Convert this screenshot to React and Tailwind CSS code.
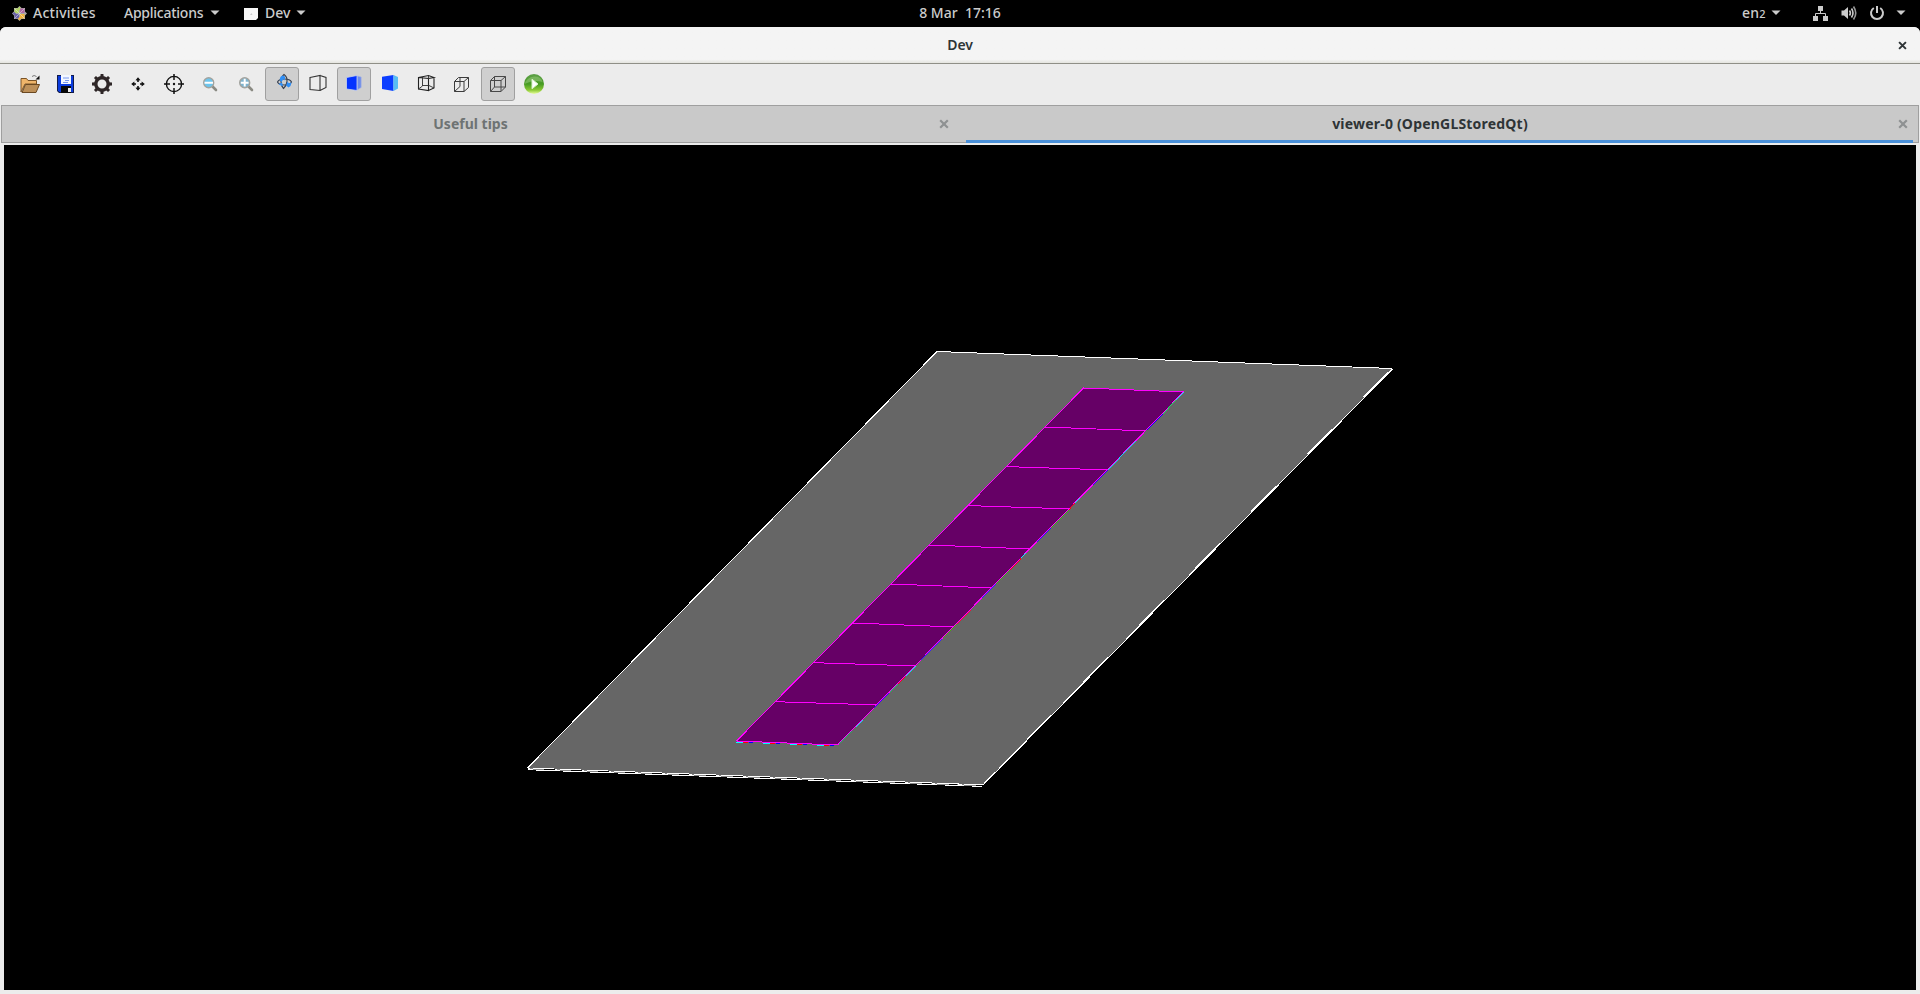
import React from "react";

const Icon = ({ children }) => (
  <svg width="24" height="24" viewBox="0 0 24 24" fill="none">
    {children}
  </svg>
);

const OpenIcon = () => (
  <Icon>
    <path d="M3 20V6.5h5.5L10 8.5h8.5V12H7z" fill="#efb56a" stroke="#7a5428" />
    <path d="M4 20.5 7.5 12.500H21.500L18 20.500z" fill="#bd9059" stroke="#6b4922" />
    <path d="M14 4.500Q16 2.500 18.500 4.500" stroke="#777" />
    <path d="M21.500 3.500V7.500H17.500z" fill="#111" />
  </Icon>
);

const SaveIcon = () => (
  <Icon>
    <path d="M3 3H20V21H5L3 19z" fill="#111b4c" />
    <path d="M4 4H19V20H5.500L4 18.500z" fill="#0b3cdd" />
    <rect x="7" y="3" width="10" height="9" fill="#f3f7ff" />
    <path d="M9 6H15M11 8.500H15M9 10.500H14" stroke="#7898ef" />
    <rect x="7" y="14" width="10" height="7" fill="#080808" />
    <rect x="14" y="16" width="3" height="4" fill="#ececec" />
  </Icon>
);

const GEAR_ANGLES = [0, 45, 90, 135, 180, 225, 270, 315];
const GearIcon = () => (
  <Icon>
    <circle cx="12" cy="12" r="6.200" stroke="#2e2627" strokeWidth="3.400" />
    {GEAR_ANGLES.map((a) => (
      <path key={a} d="M10.300 5.500 10.600 2H13.400L13.700 5.500z" fill="#2e2627" transform={`rotate(${a} 12 12)`} />
    ))}
  </Icon>
);

const MoveIcon = () => (
  <Icon>
    {[0, 90, 180, 270].map((a) => (
      <path key={a} d="M12 5.200 14.500 8.300 12.800 8.500V10H11.200V8.500L9.500 8.300z" fill="#111" transform={`rotate(${a} 12 12)`} />
    ))}
  </Icon>
);

const TargetIcon = () => (
  <Icon>
    <circle cx="12" cy="12" r="7.600" stroke="#111" strokeWidth="1.400" />
    <path d="M12 2V8M12 16V22M2 12H8M16 12H22" stroke="#111" strokeWidth="1.500" />
    <circle cx="12" cy="12" r="1.200" fill="#111" />
  </Icon>
);

const ZoomIcon = ({ plus }) => (
  <Icon>
    <path d="M14.500 14.500 18 18" stroke="#8b8b83" strokeWidth="2.600" strokeLinecap="round" />
    <circle cx="10.700" cy="10.700" r="5" fill={plus ? "#7fb4cf" : "#6dc5ed"} stroke="#a3a39e" strokeWidth="1.400" />
    <path d={plus ? "M6.800 10.700H14.600M10.700 6.800V14.600" : "M6.500 10.700H15"} stroke="#fff" strokeWidth="2" />
  </Icon>
);

const RotateIcon = () => (
  <Icon>
    <path d="M7.500 10Q9 7 14.500 7T21.500 10Q20 13 14.500 13T7.500 10z" stroke="#3b4352" strokeWidth="1.200" />
    <path d="M14 2.500Q17.500 5 17 9.500T13.500 16.500Q11 14 11 9.500T14 2.500z" stroke="#3b4352" strokeWidth="1.200" />
    <path d="M9.800 8.500Q9.500 4.500 12.500 3.500L15 4.500 15 8.500 13.500 7 11.500 10z" fill="#2f8ef5" />
    <path d="M8.500 12 12 10.500 13 13.500 11.500 14zM16 13.500 17.500 9.500 18.800 11.200 21.500 10.500 20.500 14 18.500 15.500z" fill="#2f8ef5" />
  </Icon>
);

const PerspectiveIcon = () => (
  <Icon>
    <path d="M4 5.500 14 3.500V18.500L4 17.500zM14 3.500 20 5.500V15.500L14 18.500" stroke="#333" strokeWidth="1.100" />
  </Icon>
);

const HiddenSolidIcon = () => (
  <Icon>
    <path d="M4.500 5.500 15 3.500V18.500L4.500 17z" fill="#0433ff" stroke="#c9d3ee" strokeWidth="0.800" />
    <path d="M15.500 4 19.200 5V15.500L15.500 17.700z" fill="#6f8de8" stroke="#a7b6e6" strokeWidth="0.600" />
  </Icon>
);

const SolidIcon = () => (
  <Icon>
    <path d="M4 4.700 15.500 3V19L4 17z" fill="#0b3dff" />
    <path d="M15.500 3 20 5V16.500L15.500 19z" fill="#58bdf3" />
  </Icon>
);

const WirePerspectiveIcon = () => (
  <Icon>
    <path d="M4.500 5.500 14.500 6.500V18.500L4.500 17zM4.500 5.500 14.500 3.500 20 5.500 14.500 6.500M20 5.500V16L14.500 18.500" stroke="#222" strokeWidth="1.100" />
    <path d="M8.500 5V14L4.500 17M8.500 13.500H15L20 16M14.500 3.500V7" stroke="#2d2d2d" strokeWidth=".9" />
  </Icon>
);

const OrthoIcon = ({ grey }) => (
  <Icon>
    {grey ? (
      <path d="M4.500 8.500H15V19.500H4.500zM4.500 8.500 8.500 4.500H19.500L15 8.500M19.500 4.500V15L15 19.500M8.500 4.500V15H19.500M8.500 15 4.500 19.500" stroke="#484848" />
    ) : (
      <path d="M4.500 9.500H14V19.500H4.500zM4.500 9.500 8.500 5.500H18.500L14 9.500M18.500 5.500V15.500L14 19.500M10 5.500V14.500L4.500 19.500" stroke="#3c3c3c" />
    )}
  </Icon>
);

const RunIcon = () => (
  <Icon>
    <defs>
      <linearGradient id="run" x1="0" y1="0" x2="0" y2="1">
        <stop offset="0" stopColor="#5fa04a" />
        <stop offset="0.500" stopColor="#469b22" />
        <stop offset="0.800" stopColor="#8bc934" />
        <stop offset="1" stopColor="#eaffa0" />
      </linearGradient>
    </defs>
    <circle cx="12" cy="12" r="10" fill="url(#run)" />
    <path d="M2.500 12Q5 5 12 4.500T20.500 10Q12 7 2.500 12z" fill="#9ccc80" opacity=".5" />
    <path d="M10 7.200 16 12 10 16.800z" fill="#fff" stroke="#d9f3c6" />
  </Icon>
);

const TOOLS = [
  { id: "open", icon: <OpenIcon /> },
  { id: "save", icon: <SaveIcon /> },
  { id: "settings", icon: <GearIcon /> },
  { id: "move", icon: <MoveIcon /> },
  { id: "pick", icon: <TargetIcon /> },
  { id: "zoom-out", icon: <ZoomIcon /> },
  { id: "zoom-in", icon: <ZoomIcon plus /> },
  { id: "rotate", icon: <RotateIcon />, on: true },
  { id: "hidden-line", icon: <PerspectiveIcon /> },
  { id: "hidden-surface", icon: <HiddenSolidIcon />, on: true },
  { id: "surface", icon: <SolidIcon /> },
  { id: "wireframe", icon: <WirePerspectiveIcon /> },
  { id: "perspective", icon: <OrthoIcon /> },
  { id: "ortho", icon: <OrthoIcon grey />, on: true },
  { id: "run", icon: <RunIcon /> },
];

const Caret = () => (
  <svg width="10" height="6" viewBox="0 0 10 6" className="shrink-0">
    <path d="M0.500 0.500H9.500L5 5z" fill="#ccc" />
  </svg>
);

const Cross = ({ className }) => (
  <svg width="10" height="10" viewBox="0 0 10 10" className={className}>
    <path d="M1.200 1.200 8.800 8.800M8.800 1.200 1.200 8.800" stroke="currentColor" strokeWidth="2.200" />
  </svg>
);

const TopBar = () => (
  <header className="grid h-[27px] grid-cols-3 bg-black text-[14px] leading-[26px] font-medium text-[#ccc]">
    <div className="flex h-[26px] items-center pl-3">
      <svg width="15" height="15" viewBox="0 0 15 15" className="mr-[6px]">
        <path d="M7.500 0 9.500 2H13V5.500L15 7.500 13 9.500V13H9.500L7.500 15 5.500 13H2V9.500L0 7.500 2 5.500V2H5.500z" fill="#aaa" />
        <path d="M2.500 2.500H7V7H2.500zM7.500 0.500 9 2.500 7.500 4 6 2.500z" fill="#b3d465" />
        <path d="M8 2.500H12.500V7H8z" fill="#b06aa5" />
        <path d="M2.500 8H7V12.500H2.500zM0.500 7.500 2.500 6 4 7.500 2.500 9z" fill="#6960a8" />
        <path d="M8 8H12.500V12.500H8zM7.500 11 9 12.500 7.500 14.500 6 12.500z" fill="#efb33f" />
        <path d="M2.500 2.500 12.500 12.500M12.500 2.500 2.500 12.500" stroke="#eee" strokeWidth=".5" />
      </svg>
      <span className="h-[26px] w-[91px] tracking-[0.25px]">Activities</span>
      <span className="h-[26px] w-[86px] tracking-[-0.25px]">Applications</span>
      <Caret />
      <svg width="14" height="12" viewBox="0 0 14 12" className="mt-[2px] ml-6">
        <path d="M0 0H14V10L12 12H0z" fill="#f7f7f7" />
        <path d="M6 7 7.500 5 8.500 7z" fill="#ccc" />
      </svg>
      <span className="ml-[7px] h-[26px] w-[31px]">Dev</span>
      <Caret />
    </div>
    <div className="h-[26px] text-center whitespace-pre">8 Mar  17:16</div>
    <div className="flex h-[26px] items-center justify-end pr-[14px]">
      <span className="h-[26px] w-[29px] tracking-[0.2px]">en<span className="text-[11px]">2</span></span>
      <Caret />
      <svg width="16" height="16" viewBox="0 0 16 16" className="ml-8" fill="#ccc">
        <path d="M5 1H10V6H5zM0 11H5V16H0zM10 11H15V16H10z" />
        <path d="M7.500 5V8.500M2.500 12V8.500H12.500V12" stroke="#ccc" fill="none" />
      </svg>
      <svg width="16" height="16" viewBox="0 0 16 16" className="ml-3" fill="none" stroke="#ccc" strokeWidth="1.600">
        <path d="M0.500 5.500H3L7 2V14L3 10.500H0.500z" fill="#ccc" stroke="none" />
        <path d="M8.500 5.500Q10.300 8 8.500 10.500M10.500 3.500Q13.500 8 10.500 12.500" />
        <path d="M12.500 1.500Q17 8 12.500 14.500" stroke="#999" />
      </svg>
      <svg width="16" height="16" viewBox="0 0 16 16" className="ml-[12px]" fill="none" stroke="#ccc" strokeWidth="2">
        <path d="M4.800 3A6 6 0 1 0 11.200 3M8 1V8" />
      </svg>
      <span className="ml-[11px] flex"><Caret /></span>
    </div>
  </header>
);

const STRIP = [
  [1045, 427, 1145, 430.9],
  [1006.5, 466.6, 1107, 469.9],
  [968.5, 505.6, 1068.5, 508.9],
  [929, 545, 1029.5, 548.9],
  [891, 584, 991, 587.9],
  [853, 623, 952.5, 626.9],
  [814, 662.7, 914.5, 665.9],
  [775.5, 701.7, 875.5, 704.9],
];

/* Coloured runs along the strip's right side, as [start y, end y, colour]. */
const RUNS = [
  [392, 400, "#00ffff"], [400, 416, "#00ff55"], [414, 430, "#0000ff"], [441, 470, "#00e5ff"],
  [470, 485, "#2000ff"], [498, 503, "#00ffff"], [503, 512, "#ff0000"], [510, 528, "#22c800"],
  [528, 542, "#1a10ff"], [553, 558, "#00ffff"], [558, 572, "#ff0000"], [570, 584, "#22c800"],
  [584, 598, "#1030ff"], [610, 624, "#ff0033"], [624, 638, "#40b000"], [639, 660, "#2020ff"],
  [666, 676, "#00ffff"], [677, 684, "#ff0000"], [684, 692, "#00e060"], [693, 708, "#2000ff"],
  [720, 727, "#00ffff"], [731, 744, "#00d050"],
];
const edgeX = (y) => 1183.5 - ((y - 392) * 346) / 353;

const Scene = () => (
  <svg width="1912" height="845" viewBox="4 145 1912 845" shapeRendering="crispEdges" className="block" fill="none">
    <path d="M937 351.500 1392.500 368.500 982.500 785.500 527.500 768z" fill="#666" />
    <path d="M527.500 768 937 351.500 1392.500 368.500" stroke="#fff" />
    <path d="M527.500 768 982.500 784.900" stroke="#fff" />
    <path d="M527.500 769.700 982.500 786.400" stroke="#fff" />
    <path d="M530 768.900 980 785.600" stroke="#888" strokeDasharray="14 13" />
    <path d="M982.500 785.500 1392.500 369" stroke="#fff" />
    <path d="M1388 372.300 984 783" stroke="#fff" strokeDasharray="35 45" />
    <path d="M1083.500 388 1183.500 392 837.500 745 736.500 741z" fill="#606" stroke="#f0f" />
    {STRIP.map(([x1, y1, x2, y2]) => (
      <path key={y1} d={`M${x1} ${y1} ${x2} ${y2}`} stroke="#f0f" />
    ))}
    {RUNS.map(([a, b, c]) => (
      <path key={a} d={`M${edgeX(a) + 0.7} ${a} ${edgeX(b) + 0.7} ${b}`} stroke={c} strokeWidth="0.9" />
    ))}
    <path d="M736.500 742.200 837 746.100" stroke="#00ffff" strokeDasharray="7 20" />
    <path d="M736.500 742.200 837 746.100" stroke="#ff0000" strokeDasharray="5 22" strokeDashoffset="-7" />
    <path d="M736.500 742.200 837 746.100" stroke="#0000ff" strokeDasharray="4 23" strokeDashoffset="-13" />
  </svg>
);

export default function App() {
  return (
    <div className="flex h-[994px] w-[1920px] flex-col overflow-hidden bg-black font-['Noto_Sans','Open_Sans',sans-serif]">
      <TopBar />
      <div className="flex h-[967px] flex-col overflow-hidden rounded-t-[6px] bg-[#ececec]">
        <div className="grid h-[37px] shrink-0 grid-cols-[1fr_auto_1fr] items-center border-b border-[#8f8f87] bg-linear-to-b from-[#f4f4f4] from-90% to-[#e4e4df] text-[14px] font-semibold text-[#2e3436]">
          <span />
          <span className="pb-[2px] tracking-[-0.1px]">Dev</span>
          <Cross className="mr-[13px] size-[9px] justify-self-end" />
        </div>
        <div className="flex h-[41px] shrink-0 gap-[2px] pt-[3px] pl-[13px]">
          {TOOLS.map(({ id, icon, on }) => (
            <div
              key={id}
              className={`flex size-[34px] items-center justify-center rounded-[3px] border ${on ? "border-[#a0a0a0] bg-[#cfcfcf]" : "border-transparent"}`}
            >
              {icon}
            </div>
          ))}
        </div>
        <div className="mx-px flex h-[38px] shrink-0 border border-[#9f9f9f] bg-[#c9c9c9] text-[14px] font-bold">
          <div className="flex w-[964px] items-center">
            <span className="flex-1 pb-[2px] text-center text-[#6e7373]">Useful tips</span>
            <Cross className="mr-[17px] text-[#8e9192]" />
          </div>
          <div className="-mb-px flex w-[947px] items-center border-b-[3px] border-[#4a90d9] pt-[2px]">
            <span className="flex-1 pr-[4px] pb-[2px] text-center tracking-[0.2px] text-[#2e3436]">viewer-0 (OpenGLStoredQt)</span>
            <Cross className="mr-[5px] text-[#8e9192]" />
          </div>
        </div>
        <div className="mx-1 mt-[2px] h-[845px] shrink-0 bg-black">
          <Scene />
        </div>
      </div>
    </div>
  );
}
